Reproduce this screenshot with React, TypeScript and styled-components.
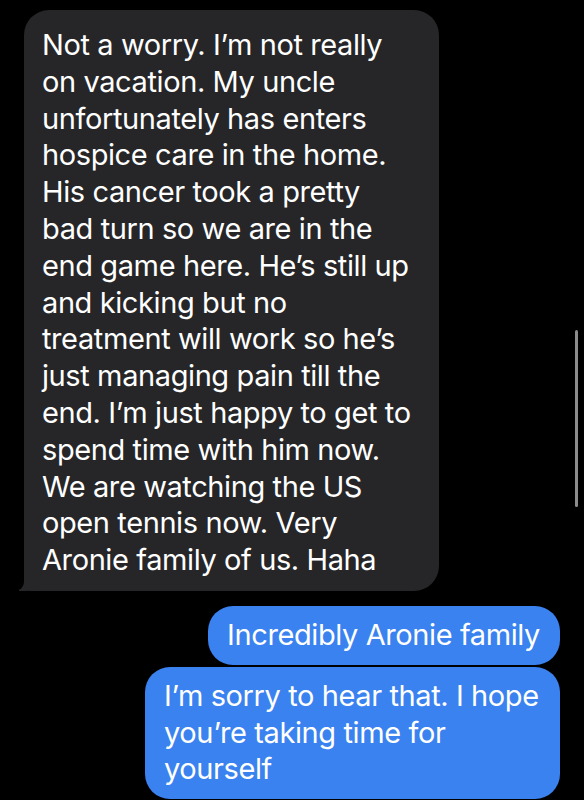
import styled, { createGlobalStyle } from "styled-components";

const GlobalStyle = createGlobalStyle`
    html, body {
        margin: 0;
        padding: 0;
        background: #000;
    }
    body {
        font-family: Inter, "Liberation Sans", sans-serif;
        -webkit-font-smoothing: antialiased;
    }
`;

const Screen = styled.div`
    position: relative;
    width: 584px;
    height: 800px;
    overflow: hidden;
    background: #000;
    display: flex;
    flex-direction: column;
    padding: 10px 24px 0 24px;
    box-sizing: border-box;
`;

/* one message bubble, colour and side come from props */
const Bubble = styled.div<{ $mine?: boolean }>`
    position: relative;
    align-self: ${(p) => (p.$mine ? "flex-end" : "flex-start")};
    background: ${(p) => (p.$mine ? "#3a82f0" : "#262628")};
    color: #fff;
    border-radius: 25px;
    padding: ${(p) => (p.$mine ? "11px 20px 11px 19px" : "17px 12px 12px 18px")};
    font-size: 29px;
    line-height: 36.8px;
    letter-spacing: -0.4px;
`;

const TheirBubble = styled(Bubble)`
    width: 415px;
    box-sizing: border-box;
    border-bottom-left-radius: 6px;

    &::before {
        content: "";
        position: absolute;
        bottom: 0;
        left: -5px;
        width: 20px;
        height: 20px;
        background: #262628;
        border-bottom-right-radius: 14px;
    }
    &::after {
        content: "";
        position: absolute;
        bottom: 0;
        left: -20px;
        width: 20px;
        height: 22px;
        background: #000;
        border-bottom-right-radius: 9px;
    }
`;

const WideBubble = styled(Bubble)`
    width: 376px;
`;

const Line = styled.span`
    display: block;
    white-space: nowrap;
    position: relative;
    z-index: 1;
`;

const Gap = styled.div<{ $h: number }>`
    height: ${(p) => p.$h}px;
    flex-shrink: 0;
`;

const ScrollThumb = styled.div`
    position: absolute;
    right: 6px;
    top: 330px;
    width: 3px;
    height: 177px;
    border-radius: 2px;
    background: #8c8c8c;
`;

const theirs = [
    "Not a worry. I\u2019m not really",
    "on vacation. My uncle",
    "unfortunately has enters",
    "hospice care in the home.",
    "His cancer took a pretty",
    "bad turn so we are in the",
    "end game here. He\u2019s still up",
    "and kicking but no",
    "treatment will work so he\u2019s",
    "just managing pain till the",
    "end. I\u2019m just happy to get to",
    "spend time with him now.",
    "We are watching the US",
    "open tennis now. Very",
    "Aronie family of us. Haha",
];

const short = ["Incredibly Aronie family"];
const long = ["I\u2019m sorry to hear that. I hope", "you\u2019re taking time for", "yourself"];

export default function App() {
    return (
        <>
            <GlobalStyle />
            <Screen>
                <TheirBubble>
                    {theirs.map((l) => (
                        <Line key={l}>{l}</Line>
                    ))}
                </TheirBubble>
                <Gap $h={15} />
                <Bubble $mine>
                    {short.map((l) => (
                        <Line key={l}>{l}</Line>
                    ))}
                </Bubble>
                <Gap $h={2} />
                <WideBubble $mine>
                    {long.map((l) => (
                        <Line key={l}>{l}</Line>
                    ))}
                </WideBubble>
                <ScrollThumb />
            </Screen>
        </>
    );
}
